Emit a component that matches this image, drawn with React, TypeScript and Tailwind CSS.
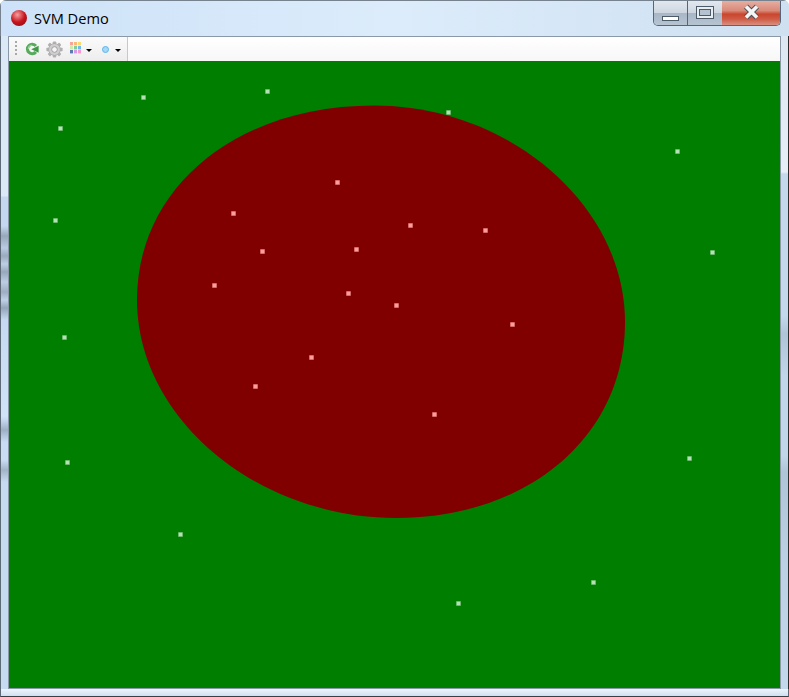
const greenPoints = [
  [143, 97], [267, 91], [448, 112], [60, 128], [677, 151], [55, 220], [712, 252],
  [64, 337], [67, 462], [689, 458], [180, 534], [593, 582], [458, 603],
];

const redPoints = [
  [337, 182], [233, 213], [410, 225], [485, 230], [262, 251], [356, 249], [214, 285],
  [348, 293], [396, 305], [512, 324], [311, 357], [255, 386], [434, 414],
];

const regionPath =
  "M374 105.5C509.3 105.5 625 205.3 625 322C625 435.7 528.8 518 396 518C256.1 518 137 417.7 137 300C137 187.2 236.5 105.5 374 105.5Z";

function Caret() {
  return <div className="mt-[2px] h-0 w-0 border-x-[3px] border-t-[3px] border-x-transparent border-t-black" />;
}

function RefreshIcon() {
  return (
    <svg width="14" height="14" viewBox="0 0 16 16">
      <path d="M12.4 4.6A5.4 5.4 0 1 0 12.4 11.4" fill="none" stroke="#58ab5c" strokeWidth="3.6" />
      <path d="M7.2 8.2L15.6 4.2V12.2Z" fill="#3f9a48" />
      <path d="M3.6 8A4.4 4.4 0 0 1 8 3.6" fill="none" stroke="#b6e0ae" strokeWidth="1" />
    </svg>
  );
}

function GearIcon() {
  const teeth = [0, 45, 90, 135, 180, 225, 270, 315];
  return (
    <svg width="17" height="17" viewBox="0 0 18 18">
      {teeth.map((a) => (
        <rect key={a} x="7.2" y="0.4" width="3.6" height="4" rx="0.8" fill="#b0b0b0" transform={`rotate(${a} 9 9)`} />
      ))}
      <circle cx="9" cy="9" r="6.2" fill="#cfcfcf" stroke="#acacac" strokeWidth="1" />
      <circle cx="9" cy="9" r="3" fill="#f4f4f4" stroke="#9a9a9a" strokeWidth="1" />
    </svg>
  );
}

function PaletteIcon() {
  const colors = [
    "#f5a59a", "#fbb878", "#fbd870",
    "#cfe8b0", "#7fd09a", "#70b8f0",
    "#5a7ab0", "#d898e8", "#f898d0",
  ];
  return (
    <svg width="11" height="12" viewBox="0 0 11 12" className="mb-[3px]">
      {colors.map((c, i) => (
        <rect key={c} x={(i % 3) * 4} y={Math.floor(i / 3) * 4} width="3" height="3.4" fill={c} />
      ))}
    </svg>
  );
}

function WindowButtons() {
  const glass = "bg-[linear-gradient(180deg,#e2e8ef_0%,#cdd6e0_48%,#a8b6c6_52%,#b6c4d2_100%)]";
  return (
    <div className="flex h-[25px] w-[128px] overflow-hidden rounded-b-[5px] border border-t-0 border-[#55667a]">
      <div className={`flex w-[34px] items-end justify-center border-r border-[#55667a] pb-[4px] ${glass}`}>
        <div className="h-[5px] w-[17px] border border-[#4d5a68] bg-white" />
      </div>
      <div className={`flex w-[34px] items-center justify-center pb-[2px] ${glass}`}>
        <div className="flex h-[13px] w-[18px] items-center justify-center border border-[#4d5a68] bg-[#e8edf2]">
          <div className="h-[7px] w-[12px] border border-[#4d5a68] bg-[#b5c3d1]" />
        </div>
      </div>
      <div className="flex flex-1 items-center justify-center bg-[linear-gradient(180deg,#e6aea2_0%,#d98a78_40%,#c9452e_55%,#cf5b45_75%,#d98f80_100%)] pb-[2px]">
        <svg width="17" height="16" viewBox="0 0 17 16">
          <path d="M3 2.5L14 13.5M14 2.5L3 13.5" stroke="#4c4f57" strokeWidth="5.5" />
          <path d="M3 2.5L14 13.5M14 2.5L3 13.5" stroke="#f4f4f4" strokeWidth="3.6" />
        </svg>
      </div>
    </div>
  );
}

export default function App() {
  return (
    <div className="flex h-[697px] w-[789px] flex-col overflow-hidden rounded-t-[6px] bg-[#cfe0f2] [font-family:'Open_Sans',sans-serif]">
      <div className="flex h-[36px] items-start justify-between border-t border-l border-[#76828e] bg-gradient-to-r from-[#cde2f8] via-[#dcecfb] to-[#cfe0f1] pr-[8px] pl-[10px]">
        <div className="flex items-start gap-[7px] pt-[9px]">
          <div className="h-[16px] w-[16px] rounded-full bg-[radial-gradient(circle_at_40%_30%,#f5a0a0,#c8141e_50%,#7c0a12)]" />
          <span className="-mt-px text-[14.6px] leading-[18px] text-black">SVM Demo</span>
        </div>
        <WindowButtons />
      </div>

      <div className="flex flex-1">
        {/* left frame, the blurred grey patches come from the glass */}
        <div className="w-[8px] border-l border-[#5e6a78] bg-[linear-gradient(180deg,#dbe8f5_0px,#dbe8f5_160px,#c3d8f0_161px,#c3d8f0_190px,#97a8bc_200px,#b8cbe2_212px,#9aaabf_220px,#bccee4_228px,#97a8bc_236px,#bccee4_246px,#9dadc2_256px,#bfd1e8_264px,#94a5b9_272px,#c5daf2_284px,#d0e2f6_380px,#c4d8f0_384px,#9eafc4_394px,#c8dcf4_406px,#c8dcf4_424px,#a2b3c8_434px,#c6daf2_446px,#c6daf2_100%)]" />

        <div className="flex w-[773px] flex-col border border-[#8a98a8]">
          <div className="flex h-[24px] bg-gradient-to-b from-white to-[#f7f7f7]">
            <div className="flex w-[119px] items-center border-r border-[#c8c8c8] bg-gradient-to-b from-[#fbfbfb] to-[#ededed] pl-[6px]">
              <div className="mb-[2px] h-[14px] w-[2px] border-l-2 border-dotted border-[#a8a8a8]" />
              <div className="ml-[8px] flex"><RefreshIcon /></div>
              <div className="ml-[7px] flex"><GearIcon /></div>
              <div className="ml-[7px] flex"><PaletteIcon /></div>
              <div className="ml-[5px] flex"><Caret /></div>
              <div className="ml-[10px] h-[7px] w-[7px] rounded-full border border-[#5fb2e8] bg-[#a4d8f7]" />
              <div className="ml-[6px] flex"><Caret /></div>
            </div>
          </div>

          <div className="h-[627px] w-full bg-[#007e00]">
            {/* decision regions with samples, drawn in window coordinates */}
            <svg width="771" height="627" viewBox="9 61 771 627" className="block">
              <path d={regionPath} fill="#800000" />
              {greenPoints.map(([x, y]) => (
                <g key={`${x}-${y}`}>
                  <rect x={x - 2} y={y - 2} width="5" height="5" rx="1" fill="#6fb86f" />
                  <rect x={x - 1} y={y - 1} width="3" height="3" fill="#b4e2b4" />
                </g>
              ))}
              {redPoints.map(([x, y]) => (
                <g key={`${x}-${y}`}>
                  <rect x={x - 2} y={y - 2} width="5" height="5" rx="1" fill="#d86a6a" />
                  <rect x={x - 1} y={y - 1} width="3" height="3" fill="#ff9c9c" />
                </g>
              ))}
            </svg>
          </div>
        </div>

        <div className="w-[8px] border-r border-[#2c2c2c] bg-[linear-gradient(180deg,#dde7f1_0px,#e6eef6_136px,#c4d8ec_138px,#c4d8ec_280px,#b0c4d8_298px,#c2d6ea_340px,#c2d6ea_420px,#b0c4d8_436px,#bcd0e4_520px,#c4d8ec_100%)]" />
      </div>

      <div className="h-[8px] border-x border-b border-x-[#5e6a78] border-b-[#3a3f46] bg-gradient-to-b from-[#eef4fb] to-[#cfe0f2]" />
    </div>
  );
}
